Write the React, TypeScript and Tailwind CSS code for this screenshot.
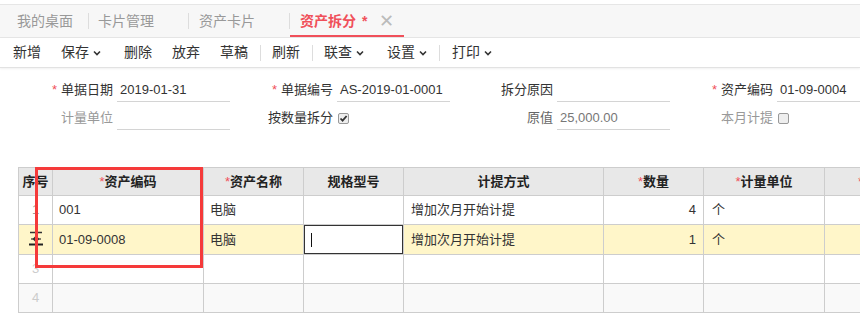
import React from 'react';

const FONT = { fontFamily: '"Liberation Sans", "Noto Sans CJK SC", sans-serif' };

const Chevron = () => (
  <svg width="8" height="6" viewBox="0 0 8 6" className="ml-[4px]">
    <path d="M1 1.5 L4 4.5 L7 1.5" fill="none" stroke="#333" strokeWidth="1.6" />
  </svg>
);

const Sep = ({ className }: { className: string }) => (
  <span className={`h-[16px] w-px bg-[#ddd] ${className}`} />
);

const Star = () => <span className="mr-[4px] text-[#f0505a]">*</span>;

const Field = ({
  label,
  required,
  value,
  labelClass = 'text-[#333]',
  valueClass = 'text-[#333]',
}: {
  label: string;
  required?: boolean;
  value?: string;
  labelClass?: string;
  valueClass?: string;
}) => (
  <div className="flex h-[24px] items-center">
    <div className={`w-[103px] text-right ${labelClass}`}>
      {required && <Star />}
      {label}
    </div>
    <div className={`ml-[4px] flex h-[24px] w-[113px] items-center border-b border-[#d4d4d4] pl-[3px] ${valueClass}`}>
      {value}
    </div>
  </div>
);

const CheckField = ({ label, checked, labelClass }: { label: string; checked?: boolean; labelClass: string }) => (
  <div className="flex h-[24px] items-center">
    <div className={`w-[103px] text-right ${labelClass}`}>{label}</div>
    <div className="ml-[5px] flex h-[24px] w-[112px] items-center">
      <span className="flex h-[11px] w-[11px] items-center justify-center rounded-[2px] border border-[#999] bg-[#eee]">
        {checked && (
          <svg width="9" height="9" viewBox="0 0 9 9">
            <path d="M1.5 4.5 L3.6 6.7 L7.6 2" fill="none" stroke="#333" strokeWidth="1.8" />
          </svg>
        )}
      </span>
    </div>
  </div>
);

const RowIcon = () => (
  <svg width="14" height="16" viewBox="0 0 14 16">
    <path d="M1 2.5 H13" stroke="#333" strokeWidth="1.5" />
    <path d="M7 2.5 V6" stroke="#333" strokeWidth="1.5" />
    <path d="M7 5.5 L10.5 9 L7 12.5 L3.5 9 Z" fill="#333" />
    <path d="M2 9 H12" stroke="#333" strokeWidth="1.2" />
    <path d="M0 14.5 H14" stroke="#222" strokeWidth="2" />
  </svg>
);

const cols = [
  { title: '序号', w: 'w-[34px]' },
  { title: '资产编码', w: 'w-[151px]', req: true },
  { title: '资产名称', w: 'w-[100px]', req: true },
  { title: '规格型号', w: 'w-[100px]' },
  { title: '计提方式', w: 'w-[200px]' },
  { title: '数量', w: 'w-[100px]', req: true },
  { title: '计量单位', w: 'w-[121px]', req: true },
  { title: '使用部门', w: 'w-[124px]', req: true },
];

const App = () => {
  const td = 'h-[29px] border border-[#cdcdcd] px-[6px] whitespace-nowrap overflow-hidden';
  return (
    <div className="h-[318px] w-[860px] overflow-hidden bg-white text-[13px] text-[#333]" style={FONT}>
      {/* tabs */}
      <div className="mt-[4px] flex h-[34px] items-center border-y border-[#e6e6e6] bg-[#f7f7f7] text-[14px] text-[#999]">
        <div className="w-[88px] pl-[17px]">我的桌面</div>
        <Sep className="" />
        <div className="w-[99px] pl-[9px]">卡片管理</div>
        <Sep className="" />
        <div className="w-[100px] pl-[10px]">资产卡片</div>
        <Sep className="" />
        <div className="flex h-full w-[114px] items-center border-b-2 border-[#f0505a] pl-[10px] pt-[2px] text-[#f0505a]">
          <span className="font-bold">资产拆分</span>
          <span className="ml-[6px] font-bold">*</span>
          <span className="ml-[12px] text-[18px] font-light text-[#bbb]">✕</span>
        </div>
      </div>

      {/* toolbar */}
      <div className="flex h-[30px] items-center border-b border-[#e2e2e2] text-[14px] text-[#333] shadow-[0_1px_2px_rgba(0,0,0,0.06)]">
        <span className="ml-[13px]">新增</span>
        <span className="ml-[20px] flex items-center">保存<Chevron /></span>
        <span className="ml-[23px]">删除</span>
        <span className="ml-[20px]">放弃</span>
        <span className="ml-[20px]">草稿</span>
        <Sep className="ml-[12px]" />
        <span className="ml-[11px]">刷新</span>
        <Sep className="ml-[12px]" />
        <span className="ml-[11px] flex items-center">联查<Chevron /></span>
        <span className="ml-[23px] flex items-center">设置<Chevron /></span>
        <Sep className="ml-[12px]" />
        <span className="ml-[12px] flex items-center">打印<Chevron /></span>
      </div>

      {/* form */}
      <div className="grid grid-cols-[220px_220px_220px_220px] gap-y-[4px] pl-[10px] pt-[10px]">
        <Field label="单据日期" required value="2019-01-31" />
        <Field label="单据编号" required value="AS-2019-01-0001" />
        <Field label="拆分原因" />
        <Field label="资产编码" required value="01-09-0004" />
        <Field label="计量单位" labelClass="text-[#999]" />
        <CheckField label="按数量拆分" checked labelClass="text-[#333]" />
        <Field label="原值" value="25,000.00" labelClass="text-[#666]" valueClass="text-[#777]" />
        <CheckField label="本月计提" labelClass="text-[#999]" />
      </div>

      {/* grid */}
      <div className="relative ml-[18px] mt-[37px] w-[930px]">
        <table className="w-[930px] table-fixed border-collapse">
          <thead>
            <tr className="bg-[#e8e8e8]">
              {cols.map((c) => (
                <th key={c.title} className={`${c.w} h-[28px] border border-[#cdcdcd] text-center font-bold text-[#222] whitespace-nowrap`}>
                  {c.req && <span className="font-normal text-[#f0505a]">*</span>}
                  {c.title}
                </th>
              ))}
            </tr>
          </thead>
          <tbody>
            <tr className="bg-white">
              <td className={`${td} text-center text-[#999]`}>1</td>
              <td className={td}>001</td>
              <td className={td}>电脑</td>
              <td className={td}></td>
              <td className={`${td} pl-[7px]`}>增加次月开始计提</td>
              <td className={`${td} pr-[7px] text-right`}>4</td>
              <td className={`${td} pl-[8px]`}>个</td>
              <td className={`${td} text-center text-[#f0a040]`}>行政部门</td>
            </tr>
            <tr className="bg-[#fff6c9]">
              <td className={`${td} text-center`}>
                <span className="inline-flex pt-[2px]"><RowIcon /></span>
              </td>
              <td className={td}>01-09-0008</td>
              <td className={td}>电脑</td>
              <td className="h-[29px] border border-[#cdcdcd] p-0">
                <div className="flex h-[29px] items-center border border-[#333] bg-white pl-[6px]">
                  <span className="h-[14px] w-px bg-[#111]" />
                </div>
              </td>
              <td className={`${td} pl-[7px]`}>增加次月开始计提</td>
              <td className={`${td} pr-[7px] text-right`}>1</td>
              <td className={`${td} pl-[8px]`}>个</td>
              <td className={td}></td>
            </tr>
            <tr className="bg-white">
              <td className={`${td} text-center text-[#ccc]`}>3</td>
              {cols.slice(1).map((c) => (
                <td key={c.title} className={td}></td>
              ))}
            </tr>
            <tr className="bg-[#f9f9f9]">
              <td className={`${td} text-center text-[#ccc]`}>4</td>
              {cols.slice(1).map((c) => (
                <td key={c.title} className={td}></td>
              ))}
            </tr>
          </tbody>
        </table>
        <div className="absolute left-[17px] top-0 h-[101px] w-[168px] border-[3px] border-[#f53a3a]" />
      </div>
    </div>
  );
};

export default App;
